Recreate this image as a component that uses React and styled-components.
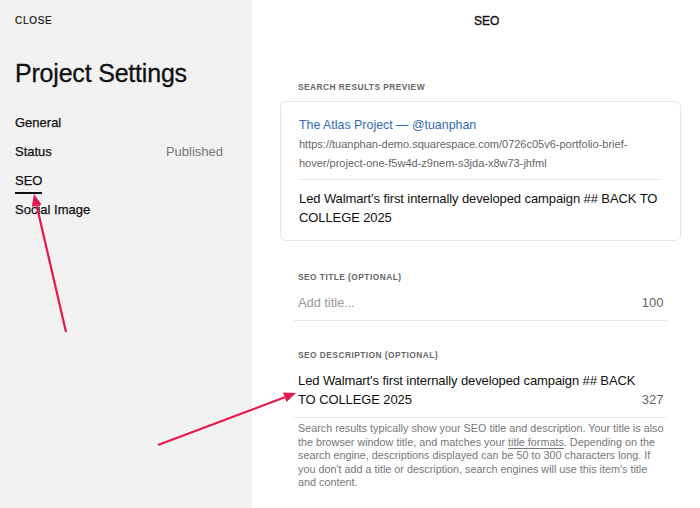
import React from 'react'
import styled, { createGlobalStyle } from 'styled-components'

const Global = createGlobalStyle`
  html, body { margin: 0; padding: 0; }
  body {
    font-family: "Liberation Sans", Arial, sans-serif;
    color: #111;
    -webkit-font-smoothing: antialiased;
  }
`

const Page = styled.div`
  position: relative;
  display: flex;
  width: 700px;
  height: 508px;
  overflow: hidden;
`

const Sidebar = styled.aside`
  width: 252px;
  flex-shrink: 0;
  background: #f2f2f2;
  padding: 15px 29px 0 15px;
  box-sizing: border-box;
`

const Close = styled.div`
  font-size: 10px;
  letter-spacing: 0.7px;
  line-height: 12px;
  -webkit-text-stroke: 0.2px #111;
`

const Heading = styled.h1`
  margin: 32px 0 28px;
  font-size: 25px;
  font-weight: 400;
  letter-spacing: -0.2px;
  line-height: 28px;
  -webkit-text-stroke: 0.3px #111;
`

const Nav = styled.nav`
  display: flex;
  flex-direction: column;
  gap: 13px;
`

const NavItem = styled.div`
  display: flex;
  justify-content: space-between;
  font-size: 13px;
  line-height: 16px;
`

const NavLabel = styled.span`
  position: relative;
  -webkit-text-stroke: 0.25px #111;
  ${p => p.$active && `
    &::after {
      content: '';
      position: absolute;
      left: 0;
      right: 0;
      bottom: -5px;
      height: 2px;
      background: #111;
    }
  `}
`

const NavValue = styled.span`
  color: #777;
`

const Main = styled.main`
  flex: 1;
  padding: 0 20px 0 28px;
  box-sizing: border-box;
`

const TopTitle = styled.div`
  text-align: center;
  font-size: 12px;
  line-height: 14px;
  padding: 14px 0 0 12px;
  -webkit-text-stroke: 0.35px #111;
`

const Label = styled.div`
  font-size: 8.4px;
  font-weight: 700;
  letter-spacing: 0.45px;
  color: #666;
  text-transform: uppercase;
  line-height: 12px;
  padding-left: ${p => p.$indent || 0}px;
`

const Section = styled.section`
  margin-top: ${p => p.$top}px;
`

const Card = styled.div`
  margin-top: 8px;
  border: 1px solid #e6e6e6;
  border-radius: 6px;
  padding: 14px 19px 13px 18px;
`

const CardTitle = styled.div`
  color: #2f6db5;
  font-size: 12.4px;
  line-height: 18px;
`

const CardUrl = styled.div`
  margin-top: 1px;
  color: #666;
  font-size: 11px;
  line-height: 19px;
  padding-bottom: 6px;
  border-bottom: 1px solid #e6e6e6;
`

const CardDesc = styled.div`
  margin-top: 9px;
  font-size: 13px;
  letter-spacing: -0.1px;
  line-height: 19px;
`

const Field = styled.div`
  margin: 10px 14px 0;
  padding: 0 4px 8px;
  border-bottom: 1px solid #e6e6e6;
  display: flex;
  align-items: flex-end;
  justify-content: space-between;
`

const FieldText = styled.div`
  flex: 0 0 340px;
  font-size: 13px;
  letter-spacing: -0.1px;
  line-height: 19px;
  color: ${p => (p.$placeholder ? '#999' : '#111')};
`

const Count = styled.div`
  font-size: 13px;
  line-height: 19px;
  color: #666;
`

const Help = styled.p`
  margin: 4px 14px 0;
  padding: 0 4px;
  font-size: 10.8px;
  line-height: 13.5px;
  color: #777;
  white-space: nowrap;

  u {
    text-underline-offset: 2px;
  }
`

const Overlay = styled.svg`
  position: absolute;
  inset: 0;
  pointer-events: none;
`

function Arrow({ x1, y1, x2, y2 }) {
  const a = Math.atan2(y2 - y1, x2 - x1)
  const len = 12
  const w = 5
  const bx = x2 - Math.cos(a) * len
  const by = y2 - Math.sin(a) * len
  const px = -Math.sin(a) * w
  const py = Math.cos(a) * w
  return (
    <g>
      <line x1={x1} y1={y1} x2={bx} y2={by} stroke="#e5194c" strokeWidth="2.2" />
      <polygon
        points={`${x2},${y2} ${bx + px},${by + py} ${bx - px},${by - py}`}
        fill="#e5194c"
      />
    </g>
  )
}

export default function App() {
  return (
    <Page>
      <Global />
      <Sidebar>
        <Close>CLOSE</Close>
        <Heading>Project Settings</Heading>
        <Nav>
          <NavItem><NavLabel>General</NavLabel></NavItem>
          <NavItem>
            <NavLabel>Status</NavLabel>
            <NavValue>Published</NavValue>
          </NavItem>
          <NavItem><NavLabel $active>SEO</NavLabel></NavItem>
          <NavItem><NavLabel>Social Image</NavLabel></NavItem>
        </Nav>
      </Sidebar>

      <Main>
        <TopTitle>SEO</TopTitle>

        <Section $top={53}>
          <Label $indent={18}>Search Results Preview</Label>
          <Card>
            <CardTitle>The Atlas Project — @tuanphan</CardTitle>
            <CardUrl>
              https://tuanphan-demo.squarespace.com/0726c05v6-portfolio-brief-
              <br />
              hover/project-one-f5w4d-z9nem-s3jda-x8w73-jhfml
            </CardUrl>
            <CardDesc>
              Led Walmart's first internally developed campaign ## BACK TO COLLEGE 2025
            </CardDesc>
          </Card>
        </Section>

        <Section $top={30}>
          <Label $indent={18}>SEO Title (Optional)</Label>
          <Field>
            <FieldText $placeholder>Add title...</FieldText>
            <Count>100</Count>
          </Field>
        </Section>

        <Section $top={28}>
          <Label $indent={18}>SEO Description (Optional)</Label>
          <Field>
            <FieldText>
              Led Walmart's first internally developed campaign ## BACK TO COLLEGE 2025
            </FieldText>
            <Count>327</Count>
          </Field>
          <Help>
            Search results typically show your SEO title and description. Your title is also
            <br />
            the browser window title, and matches your <u>title formats</u>. Depending on the
            <br />
            search engine, descriptions displayed can be 50 to 300 characters long. If
            <br />
            you don't add a title or description, search engines will use this item's title
            <br />
            and content.
          </Help>
        </Section>
      </Main>

      <Overlay width="700" height="508" viewBox="0 0 700 508">
        <Arrow x1={66} y1={332} x2={34} y2={194} />
        <Arrow x1={158} y1={445} x2={296} y2={393} />
      </Overlay>
    </Page>
  )
}
